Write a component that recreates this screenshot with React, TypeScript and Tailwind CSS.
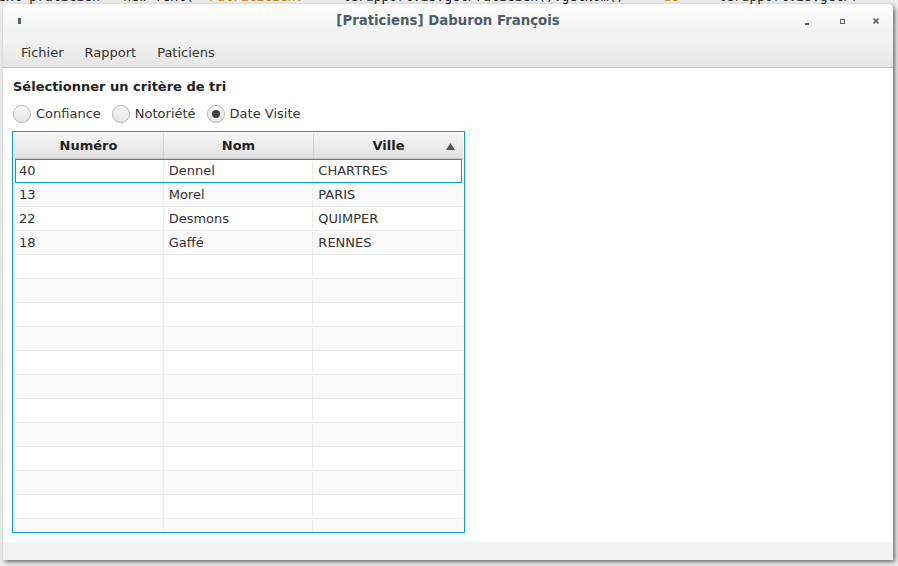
import { Fragment } from "react";

type Praticien = { num: string; nom: string; ville: string };

const praticiens: Praticien[] = [
  { num: "40", nom: "Dennel", ville: "CHARTRES" },
  { num: "13", nom: "Morel", ville: "PARIS" },
  { num: "22", nom: "Desmons", ville: "QUIMPER" },
  { num: "18", nom: "Gaffé", ville: "RENNES" },
];

const FONT = "font-['DejaVu_Sans','Liberation_Sans',sans-serif]";

function Radio({ label, checked }: { label: string; checked?: boolean }) {
  return (
    <div className="flex items-center gap-[5px]">
      <div className="w-[18px] h-[18px] rounded-full border border-[#b5b5b5] bg-gradient-to-b from-[#fafafa] to-[#e4e4e4] flex items-center justify-center">
        {checked && <div className="w-[8px] h-[8px] rounded-full bg-[#444]" />}
      </div>
      <span className="text-[13px] text-[#333]">{label}</span>
    </div>
  );
}

function Row({ p, index }: { p?: Praticien; index: number }) {
  const selected = index === 0;
  const bg = index % 2 === 0 ? "bg-white" : "bg-[#f9f9f9]";
  return (
    <div className={`relative flex h-[24px] shrink-0 border-b border-[#ececec] ${bg}`}>
      <div className="w-[150px] border-r border-[#ececec] pl-[5px] flex items-center text-[13px] text-[#333]">
        {p?.num}
      </div>
      <div className="w-[150px] border-r border-[#ececec] pl-[5px] flex items-center text-[13px] text-[#333]">
        {p?.nom}
      </div>
      <div className="w-[150px] pl-[5px] flex items-center text-[13px] text-[#333]">
        {p?.ville}
      </div>
      {selected && (
        <div className="absolute left-[1px] right-[1px] top-0 bottom-[-1px] border border-[#039ed3]" />
      )}
    </div>
  );
}

export default function App() {
  const rows = Array.from({ length: 16 }, (_, i) => i);
  return (
    <div className={`w-[898px] h-[566px] overflow-hidden bg-[#ececec] ${FONT}`}>
      {/* desktop behind: IDE code line */}
      <div className="h-[4px] overflow-hidden relative">
        <div className="absolute left-[-2px] top-[-13px] whitespace-pre font-['DejaVu_Sans_Mono',monospace] text-[13px] text-[#222]">
          {"ext praticien = new Text( "}
          <span className="text-[#c47a00]">"Patraticien: "</span>
          {" + lerapportVisVgetPraticien().getNom() + "}
          <span className="text-[#c47a00]">" de "</span>
          {" + lerapportVisVgetPr"}
        </div>
      </div>
      <div className="pl-[3px] flex">
        <div className="w-[890px] h-[556px] rounded-t-[5px] bg-white flex flex-col shadow-[2px_2px_4px_rgba(0,0,0,0.55)] overflow-hidden">
          {/* title bar */}
          <div className="h-[34px] shrink-0 bg-gradient-to-b from-[#fdfdfd] to-[#f1f1f1] flex items-center">
            <div className="w-[120px] flex items-center">
              <div className="ml-[15px] w-[3px] h-[6px] bg-[#56646e]" />
            </div>
            <div className="flex-1 text-center text-[13.3px] font-bold text-[#4f5c66]">
              [Praticiens] Daburon François
            </div>
            <div className="w-[120px] flex items-center justify-end pr-[14px]">
              <div className="w-[4px] h-[2px] bg-[#56646e] mt-[5px]" />
              <div className="ml-[31px] w-[5px] h-[5px] border-[1.5px] border-[#56646e]" />
              <div className="ml-[28px] w-[6px] h-[6px] flex items-center justify-center">
                <svg width="6" height="6" viewBox="0 0 6 6">
                  <path d="M0.5 0.5 L5.5 5.5 M5.5 0.5 L0.5 5.5" stroke="#56646e" strokeWidth="1.6" />
                </svg>
              </div>
            </div>
          </div>
          {/* menu bar */}
          <div className="h-[30px] shrink-0 bg-gradient-to-b from-[#f4f4f4] to-[#e6e6e6] border-b border-[#c2c2c2] flex items-center pl-[18px] gap-[21px] text-[13px] text-[#333]">
            <span>Fichier</span>
            <span>Rapport</span>
            <span>Paticiens</span>
          </div>
          {/* content */}
          <div className="flex-1 bg-white pl-[9px] pt-[10px] flex flex-col">
            <div className="pl-[1px] text-[13px] font-bold text-[#222] h-[17px] leading-[17px]">
              Sélectionner un critère de tri
            </div>
            <div className="pl-[1px] mt-[9px] flex items-center gap-[11px] h-[19px]">
              <Radio label="Confiance" />
              <Radio label="Notoriété" />
              <Radio label="Date Visite" checked />
            </div>
            <div className="mt-[8px] w-[453px] h-[402px] border border-[#039ed3] p-[1px] overflow-hidden flex flex-col">
              <div className="flex h-[26px] shrink-0 bg-gradient-to-b from-[#f6f6f6] to-[#e2e2e2] border-b border-[#c8c8c8]">
                <div className="w-[150px] border-r border-[#d4d4d4] flex items-center justify-center pt-[1px] text-[13px] font-bold text-[#222]">
                  Numéro
                </div>
                <div className="w-[150px] border-r border-[#d4d4d4] flex items-center justify-center pt-[1px] text-[13px] font-bold text-[#222]">
                  Nom
                </div>
                <div className="w-[149px] flex items-center justify-center pt-[1px] text-[13px] font-bold text-[#222] relative">
                  Ville
                  <svg className="absolute right-[8px] top-[10px]" width="9" height="7" viewBox="0 0 9 7">
                    <path d="M4.5 0 L9 7 L0 7 Z" fill="#555" />
                  </svg>
                </div>
              </div>
              {rows.map((i) => (
                <Fragment key={i}>
                  <Row p={praticiens[i]} index={i} />
                </Fragment>
              ))}
            </div>
          </div>
          {/* footer */}
          <div className="h-[18px] shrink-0 bg-[#f2f2f2]" />
        </div>
      </div>
    </div>
  );
}
